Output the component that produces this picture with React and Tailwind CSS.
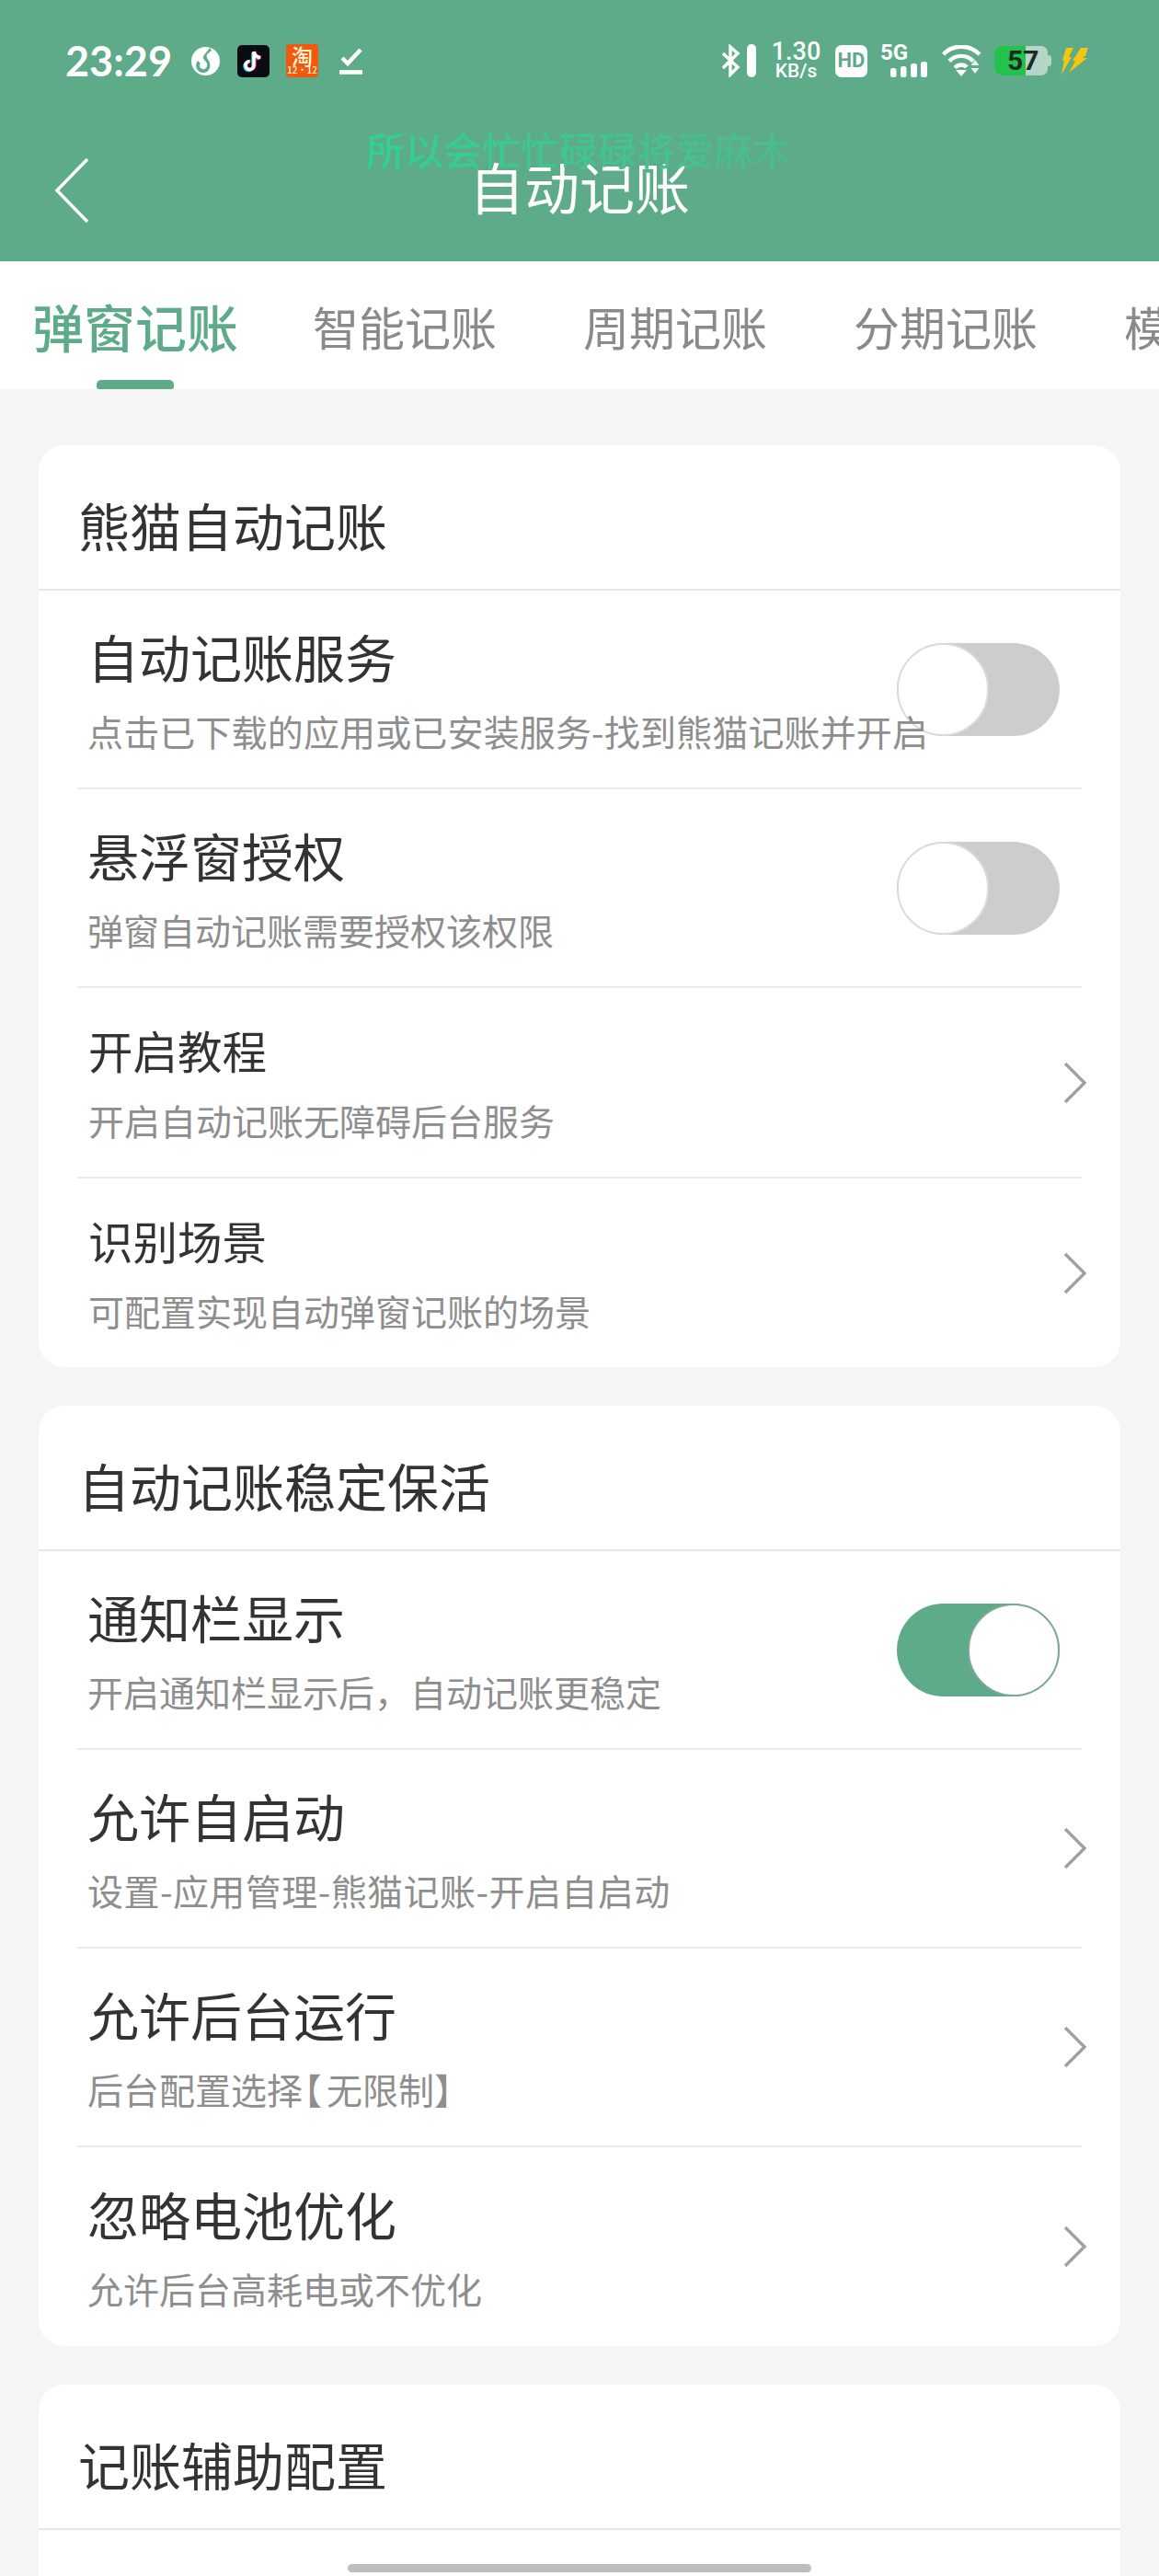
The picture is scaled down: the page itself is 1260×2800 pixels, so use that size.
const FONT = '"Noto Sans CJK SC", "Noto Sans", sans-serif'

const tabs = ['智能记账', '周期记账', '分期记账', '模板记账']

const cards = [
  {
    title: '熊猫自动记账',
    rows: [
      { title: '自动记账服务', sub: '点击已下载的应用或已安装服务-找到熊猫记账并开启', toggle: 'off', subClass: 'tracking-[0.15px]' },
      { title: '悬浮窗授权', sub: '弹窗自动记账需要授权该权限', toggle: 'off' },
      { title: '开启教程', sub: '开启自动记账无障碍后台服务', small: true, height: 'h-[207px]' },
      { title: '识别场景', sub: '可配置实现自动弹窗记账的场景', small: true, height: 'h-[205px]' },
    ],
  },
  {
    title: '自动记账稳定保活',
    rows: [
      { title: '通知栏显示', sub: '开启通知栏显示后，自动记账更稳定', toggle: 'on' },
      { title: '允许自启动', sub: '设置-应用管理-熊猫记账-开启自启动', subClass: 'tracking-[0.45px]' },
      { title: '允许后台运行', sub: <>后台配置选择<span className="-ml-[18px]">【</span><span className="ml-[5px]">无限制】</span></> },
      { title: '忽略电池优化', sub: '允许后台高耗电或不优化' },
    ],
  },
  {
    title: '记账辅助配置',
    rows: [{ title: '自动记账', sub: '' }],
  },
]

function Toggle({ on }) {
  if (on) {
    return (
      <div className="flex justify-end w-[177px] h-[101px] rounded-full bg-[#5dab88] shrink-0">
        <div className="w-[100px] h-[101px] rounded-full bg-white border-2 border-[#7fa898]" />
      </div>
    )
  }
  return (
    <div className="flex justify-start w-[177px] h-[101px] rounded-full bg-[#cdcdcd] shrink-0">
      <div className="w-[100px] h-[101px] rounded-full bg-white border-2 border-[#dcdcdc]" />
    </div>
  )
}

function Chevron() {
  return (
    <svg className="w-[26px] h-[46px] shrink-0 -mr-[6px]" viewBox="0 0 26 46" fill="none" stroke="#a0a0a0" strokeWidth="3.4">
      <path d="M2 2 L23 23 L2 44" />
    </svg>
  )
}

function Row({ row, last }) {
  return (
    <div className={`flex items-center justify-between mx-[42px] ${row.small ? 'pl-[12px]' : 'pl-[11px]'} ${row.toggle ? 'pr-[24px]' : ''} ${row.height || 'h-[216px]'} ${last ? '' : 'border-b-2 border-[#eaeaea]'}`}>
      <div className={`relative z-10 min-w-0 w-0 flex-1 whitespace-nowrap ${row.small ? '-mt-[3px]' : ''}`}>
        <div className={`text-[#333333] leading-[60px] ${row.small ? 'text-[48.5px]' : 'text-[56px]'}`}>{row.title}</div>
        <div className={`text-[#8e8e8e] text-[39px] leading-[44px] ${row.small ? 'mt-[24px]' : 'mt-[29px]'} ${row.subClass || ''}`}>{row.sub}</div>
      </div>
      {row.toggle ? <Toggle on={row.toggle === 'on'} /> : <Chevron />}
    </div>
  )
}

function Card({ card }) {
  return (
    <section className="bg-white rounded-[28px] overflow-hidden">
      <div className="h-[158px] flex items-center pl-[43px] border-b-2 border-[#e6e6e6]">
        <h2 className="text-[56px] leading-[64px] text-[#333333] font-normal mt-[16px]">{card.title}</h2>
      </div>
      {card.rows.map((row, i) => (
        <Row key={row.title} row={row} last={i === card.rows.length - 1} />
      ))}
    </section>
  )
}

function StatusBar() {
  return (
    <div className="flex items-center justify-between h-[36px] pl-[71px] pr-[71px] text-white">
      <div className="flex items-center">
        <span className="text-[45px] font-bold leading-none" style={{ fontFamily: 'Lato, sans-serif' }}>23:29</span>
        {/* app notification icons */}
        <svg className="w-[31px] h-[31px] ml-[21px]" viewBox="0 0 31 31">
          <circle cx="15.5" cy="15.5" r="15.5" fill="#ffffff" />
          <path d="M20 1 C17 6 13 8 13 12 C13 14 16 15 17 18 C18 22 15 25 12 24 C9 23 8 20 10 18 L7 15 C3 20 6 28 13 28 C20 28 22 20 19 15 C17 12 16 11 17 8 L22 4 Z" fill="#5dab88" />
        </svg>
        <svg className="w-[35px] h-[35px] ml-[19px]" viewBox="0 0 35 35">
          <rect width="35" height="35" rx="5" fill="#0b0b14" />
          <path d="M18 7 V22 A4.5 4.5 0 1 1 13.5 17.5 M18 7 C18.5 11 21 13 25 13.5" fill="none" stroke="#25e4e4" strokeWidth="3.4" transform="translate(-1 1)" />
          <path d="M18 7 V22 A4.5 4.5 0 1 1 13.5 17.5 M18 7 C18.5 11 21 13 25 13.5" fill="none" stroke="#f5285a" strokeWidth="3.4" transform="translate(1 0)" />
          <path d="M18 7 V22 A4.5 4.5 0 1 1 13.5 17.5 M18 7 C18.5 11 21 13 25 13.5" fill="none" stroke="#ffffff" strokeWidth="3.4" />
        </svg>
        <div className="w-[35px] h-[36px] ml-[18px] rounded-[4px] bg-[#f2590f] flex flex-col items-center justify-start overflow-hidden text-[#fff3d8]">
          <span className="text-[23px] leading-[24px] font-medium">淘</span>
          <span className="text-[10px] leading-[10px] -mt-[1px] font-medium">12·12</span>
        </div>
        <svg className="w-[25px] h-[30px] ml-[23px]" viewBox="0 0 25 30" fill="none" stroke="#ffffff">
          <path d="M3 12 L9 18 L23 3" strokeWidth="4.4" />
          <path d="M0 27.5 H25" strokeWidth="4.6" />
        </svg>
      </div>
      <div className="flex items-center">
        <svg className="w-[37px] h-[36px]" viewBox="0 0 37 36" fill="none">
          <path d="M1 10 L17 25 L9 33 V3 L17 10 L1 26" stroke="#ffffff" strokeWidth="3.4" />
          <rect x="27" y="0" width="10" height="36" rx="5" fill="#ffffff" />
        </svg>
        <div className="w-[51px] ml-[18px] flex flex-col items-center font-medium" style={{ fontFamily: 'Roboto, sans-serif' }}>
          <span className="text-[27px] leading-[23px]">1.30</span>
          <span className="text-[21px] leading-[19px]">KB/s</span>
        </div>
        <div className="w-[35px] h-[35px] ml-[17px] rounded-[7px] bg-white flex items-center justify-center text-[#5dab88] text-[22px] font-bold leading-none" style={{ fontFamily: 'Roboto, sans-serif' }}>HD</div>
        <div className="w-[51px] h-[36px] ml-[14px] flex flex-col">
          <span className="text-[24px] leading-[19px] font-bold" style={{ fontFamily: 'Roboto, sans-serif' }}>5G</span>
          <svg className="w-[51px] h-[17px]" viewBox="0 0 51 17" fill="#ffffff">
            <rect x="11" y="7" width="6.5" height="10" rx="2.5" />
            <rect x="22" y="5" width="6.5" height="12" rx="2.5" />
            <rect x="33" y="2" width="7" height="15" rx="2.5" />
            <rect x="44" y="0" width="7" height="17" rx="2.5" />
          </svg>
        </div>
        <svg className="w-[44px] h-[34px] ml-[16px]" viewBox="0 0 44 34" fill="none" stroke="#ffffff" strokeWidth="4.4">
          <path d="M1.5 10 C12 -1 30 -1 41 10" />
          <path d="M8 17.5 C15 10 27 10 34 17.5" />
          <path d="M14 24.5 C18 20.5 24 20.5 27 24" />
          <path d="M15 27 H27 L21 34 Z" fill="#ffffff" stroke="none" />
          <path d="M36 16 L40.5 22 H31.5 Z M31.5 25 H40.5 L36 31 Z" fill="#e6f2ec" stroke="none" />
        </svg>
        <div className="relative w-[62px] h-[32px] ml-[13px]">
          <div className="flex w-[58px] h-[32px] rounded-[7px] overflow-hidden bg-[#b5d5c6]">
            <div className="w-[34px] h-full bg-[#22c24c]" />
          </div>
          <div className="absolute right-0 top-[10px] w-[4px] h-[12px] rounded-r-[3px] bg-[#b5d5c6]" />
          <span className="absolute left-[14px] top-0 text-[30px] leading-[32px] font-bold text-[#1e2a22]" style={{ fontFamily: 'Roboto, sans-serif' }}>57</span>
        </div>
        <svg className="w-[35px] h-[29px] ml-[11px]" viewBox="0 0 35 29">
          <path d="M5 0 H13 L8 10 H11 L0 29 L3 14 H1 Z" fill="#f3c612" />
          <path d="M21 0 H35 L23 11 H28 L8 27 L15 14 H12 Z" fill="#f3c612" />
          <path d="M29 0 H35 L26 9 Z" fill="#5f9fb0" />
        </svg>
      </div>
    </div>
  )
}

export default function App() {
  return (
    <div className="relative w-[1260px] h-[2800px] overflow-hidden bg-[#f5f5f5]" style={{ fontFamily: FONT }}>
      {/* header */}
      <header className="relative h-[284px] pt-[48px] bg-[#5dab88]">
        <StatusBar />
        <div className="flex items-center h-[80px] mt-[83px] pl-[60px]">
          <svg className="w-[36px] h-[70px] shrink-0" viewBox="0 0 36 70" fill="none" stroke="#ffffff" strokeWidth="3.4">
            <path d="M35 1 L2 35 L35 69" />
          </svg>
          <h1 className="text-[60px] leading-[80px] text-white font-normal ml-[414px] -mt-[10px]">自动记账</h1>
        </div>
        {/* scrolling lyric */}
        <div className="absolute left-[398px] top-[137px] text-[42px] leading-[50px] font-medium whitespace-nowrap bg-gradient-to-r from-[#2fd28e] via-[#40c68e] to-[#4cbb8d] bg-clip-text text-transparent">
          所以会忙忙碌碌将爱麻木
        </div>
      </header>

      {/* tabs */}
      <nav className="flex h-[139px] bg-white overflow-hidden whitespace-nowrap pl-[36px]">
        <div className="flex flex-col items-center w-[222px] shrink-0">
          <span className="text-[56px] leading-[70px] mt-[35px] font-medium text-[#5dab88]">弹窗记账</span>
          <span className="w-[84px] h-[10px] mt-[24px] rounded-t-[5px] rounded-b-[3px] bg-[#5dab88]" />
        </div>
        {tabs.map((t) => (
          <span key={t} className="text-[50px] leading-[70px] mt-[35px] ml-[82px] mr-[12px] text-[#8a8a8a] shrink-0">{t}</span>
        ))}
      </nav>

      {/* cards */}
      <main className="flex flex-col gap-[42px] px-[42px] pt-[61px]">
        {cards.map((card) => (
          <Card key={card.title} card={card} />
        ))}
      </main>

      {/* gesture bar */}
      <div className="absolute left-[378px] top-[2787px] w-[504px] h-[9px] rounded-full bg-[#bdbdbd]" />
    </div>
  )
}
